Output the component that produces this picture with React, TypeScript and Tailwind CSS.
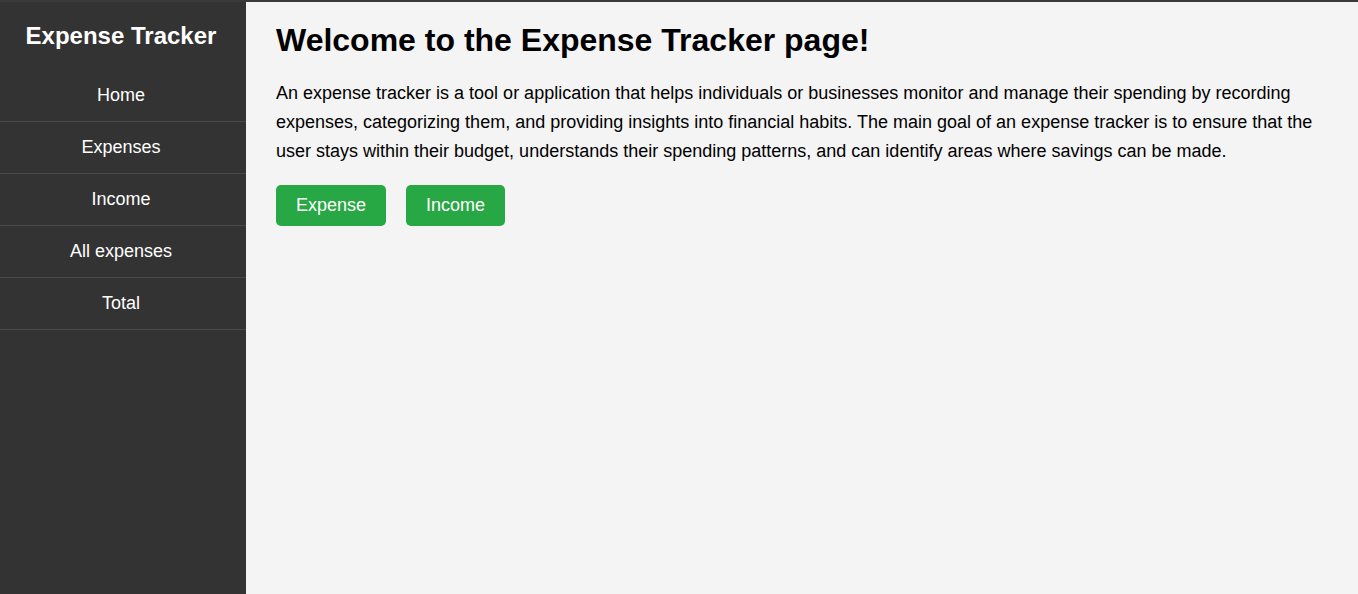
const navItems = ['Home', 'Expenses', 'Income', 'All expenses', 'Total'];

export default function App() {
  return (
    <div
      className="flex h-screen border-t-2 border-[#3a3a3a] bg-[#f4f4f4]"
      style={{ fontFamily: '"Liberation Sans", Arial, sans-serif' }}
    >
      {/* Sidebar */}
      <aside className="w-[246px] shrink-0 bg-[#333] text-white">
        <h2 className="pt-5 pb-5 pr-1 text-center text-[24px] font-bold leading-[28px]">
          Expense Tracker
        </h2>
        <ul>
          {navItems.map((item) => (
            <li
              key={item}
              className="flex h-[52px] items-center justify-center border-b border-[#4a4a4a] pr-1 text-[18px]"
            >
              {item}
            </li>
          ))}
        </ul>
      </aside>

      {/* Main */}
      <main className="flex-1 px-[30px] pt-5 text-black">
        <h1 className="mb-5 text-[32px] font-bold leading-[37px]">
          Welcome to the Expense Tracker page!
        </h1>
        <p className="mb-[19px] text-[18px] leading-[29px]">
          An expense tracker is a tool or application that helps individuals or
          businesses monitor and manage their spending by recording expenses,
          categorizing them, and providing insights into financial habits. The
          main goal of an expense tracker is to ensure that the user stays within
          their budget, understands their spending patterns, and can identify
          areas where savings can be made.
        </p>
        <div className="flex gap-5">
          <button className="h-[41px] rounded-[5px] bg-[#28a745] px-5 text-[18px] text-white">
            Expense
          </button>
          <button className="h-[41px] rounded-[5px] bg-[#28a745] px-5 text-[18px] text-white">
            Income
          </button>
        </div>
      </main>
    </div>
  );
}
